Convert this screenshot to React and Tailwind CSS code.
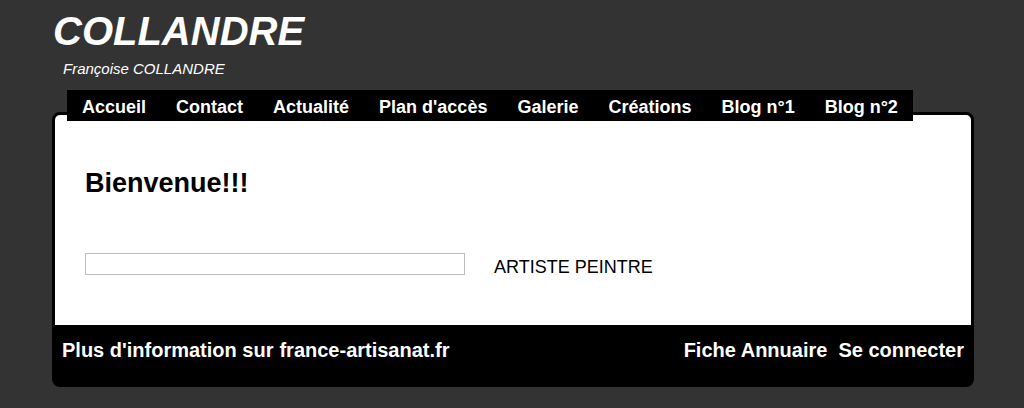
import React from 'react';

const navItems = ['Accueil', 'Contact', 'Actualité', "Plan d'accès", 'Galerie', 'Créations', 'Blog n°1', 'Blog n°2'];

const App = () => {
  return (
    <div className="min-h-[408px] bg-[#333333] font-['Liberation_Sans',Arial,sans-serif]">
      <div className="ml-[52px] w-[922px] pt-[8px]">
        <h1 className="ml-[1px] text-[40px] leading-[46px] font-bold italic text-white">COLLANDRE</h1>
        <p className="ml-[11px] mt-[6px] text-[15px] leading-[18px] italic text-white">Françoise COLLANDRE</p>

        <nav className="relative z-10 ml-[15px] mt-[12px] inline-flex h-[31px] items-center bg-black pt-[3px]">
          {navItems.map((item) => (
            <a key={item} href="#" className="px-[15px] text-[18px] leading-[21px] font-bold text-white">
              {item}
            </a>
          ))}
        </nav>

        <div className="-mt-[9px] overflow-hidden rounded-[8px] border-[3px] border-black bg-black">
          <div className="bg-white px-[30px] pt-[53px] pb-[47px]">
            <h2 className="text-[27px] leading-[31px] font-bold text-black">Bienvenue!!!</h2>
            <div className="mt-[54px] flex items-start gap-[29px]">
              <div className="h-[22px] w-[380px] border border-[#c0c0c0] bg-white" />
              <span className="pt-[4px] text-[18px] leading-[21px] text-black">ARTISTE PEINTRE</span>
            </div>
          </div>
          <div className="flex justify-between bg-black px-[7px] pt-[14px] pb-[22px] text-[20px] leading-[23px] font-bold text-white">
            <div className="flex gap-[6px]">
              <span>Plus d'information sur</span>
              <a href="#">france-artisanat.fr</a>
            </div>
            <div className="flex gap-[11px]">
              <a href="#">Fiche Annuaire</a>
              <a href="#">Se connecter</a>
            </div>
          </div>
        </div>
      </div>
    </div>
  );
};

export default App;
